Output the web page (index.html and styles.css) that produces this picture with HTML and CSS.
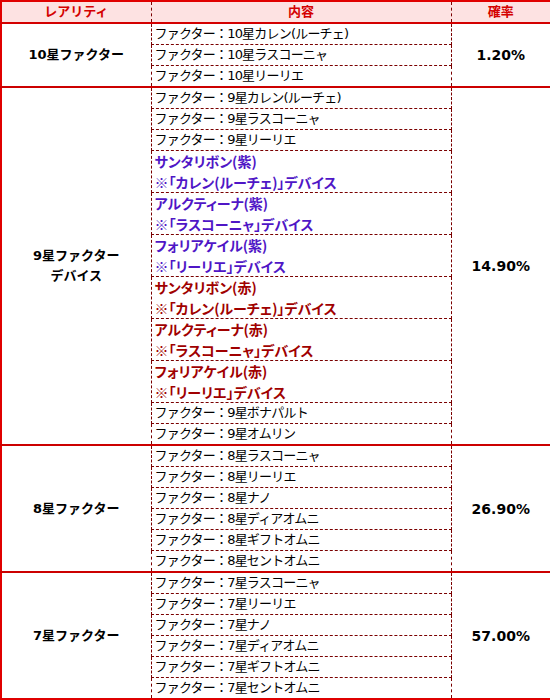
FILE: index.html
```html
<!DOCTYPE html>
<html lang="ja">
<head>
<meta charset="utf-8">
<title>排出率</title>
<link rel="stylesheet" href="styles.css">
</head>
<body>
<table class="gacha">
  <colgroup>
    <col class="c1">
    <col class="c2">
    <col class="c3">
  </colgroup>
  <thead>
    <tr><th>レアリティ</th><th>内容</th><th>確率</th></tr>
  </thead>
  <tbody>
    <tr><td class="rar" rowspan="3">10星ファクター</td><td class="item">ファクター：10星カレン(ルーチェ)</td><td class="rate" rowspan="3">1.20%</td></tr>
    <tr><td class="item">ファクター：10星ラスコーニャ</td></tr>
    <tr><td class="item">ファクター：10星リーリエ</td></tr>
  </tbody>
  <tbody>
    <tr><td class="rar" rowspan="11">9星ファクター<br>デバイス</td><td class="item">ファクター：9星カレン(ルーチェ)</td><td class="rate" rowspan="11">14.90%</td></tr>
    <tr><td class="item">ファクター：9星ラスコーニャ</td></tr>
    <tr><td class="item">ファクター：9星リーリエ</td></tr>
    <tr><td class="item dev purple">サンタリボン(紫)<br>※「カレン(ルーチェ)」デバイス</td></tr>
    <tr><td class="item dev purple">アルクティーナ(紫)<br>※「ラスコーニャ」デバイス</td></tr>
    <tr><td class="item dev purple">フォリアケイル(紫)<br>※「リーリエ」デバイス</td></tr>
    <tr><td class="item dev red">サンタリボン(赤)<br>※「カレン(ルーチェ)」デバイス</td></tr>
    <tr><td class="item dev red">アルクティーナ(赤)<br>※「ラスコーニャ」デバイス</td></tr>
    <tr><td class="item dev red">フォリアケイル(赤)<br>※「リーリエ」デバイス</td></tr>
    <tr><td class="item">ファクター：9星ボナパルト</td></tr>
    <tr><td class="item">ファクター：9星オムリン</td></tr>
  </tbody>
  <tbody>
    <tr><td class="rar" rowspan="6">8星ファクター</td><td class="item">ファクター：8星ラスコーニャ</td><td class="rate" rowspan="6">26.90%</td></tr>
    <tr><td class="item">ファクター：8星リーリエ</td></tr>
    <tr><td class="item">ファクター：8星ナノ</td></tr>
    <tr><td class="item">ファクター：8星ディアオムニ</td></tr>
    <tr><td class="item">ファクター：8星ギフトオムニ</td></tr>
    <tr><td class="item">ファクター：8星セントオムニ</td></tr>
  </tbody>
  <tbody>
    <tr><td class="rar" rowspan="6">7星ファクター</td><td class="item">ファクター：7星ラスコーニャ</td><td class="rate" rowspan="6">57.00%</td></tr>
    <tr><td class="item">ファクター：7星リーリエ</td></tr>
    <tr><td class="item">ファクター：7星ナノ</td></tr>
    <tr><td class="item">ファクター：7星ディアオムニ</td></tr>
    <tr><td class="item">ファクター：7星ギフトオムニ</td></tr>
    <tr><td class="item">ファクター：7星セントオムニ</td></tr>
  </tbody>
</table>
</body>
</html>
```

FILE: styles.css
```css
html, body {
  margin: 0;
  padding: 0;
  background: #ffffff;
}

.gacha {
  border-collapse: collapse;
  table-layout: fixed;
  width: 550px;
  border: 2px solid #e00000;
  font-family: "DejaVu Sans", "Noto Sans CJK JP", sans-serif;
  color: #000;
}

.c1 { width: 150px; }
.c2 { width: 300px; }
.c3 { width: 100px; }

.gacha th,
.gacha td {
  padding: 0 3px;
  height: 20px;
  line-height: 20px;
  box-sizing: border-box;
}

.gacha th {
  background: #fde2e2;
  color: #d40000;
  font-weight: bold;
  font-size: 13px;
  text-align: center;
  border-bottom: 2px solid #d40000;
  border-left: 1px dashed #7a0000;
  border-right: 1px dashed #7a0000;
}

.gacha tbody {
  border-top: 2px solid #cc0000;
}

.item {
  font-size: 13px;
  letter-spacing: -0.8px;
  text-align: left;
  white-space: nowrap;
  border: 1px dashed #7a0000;
}

.gacha .dev {
  font-family: "Noto Sans CJK JP", sans-serif;
  font-size: 14px;
  font-weight: bold;
  letter-spacing: 0;
  line-height: 20.5px;
  font-feature-settings: "palt";
}

.purple { color: #4f16c6; }
.red { color: #a00000; }

.rar {
  font-size: 13px;
  font-weight: bold;
  text-align: center;
  line-height: 21px;
}

.rate {
  font-size: 14px;
  font-weight: bold;
  text-align: center;
}
```
